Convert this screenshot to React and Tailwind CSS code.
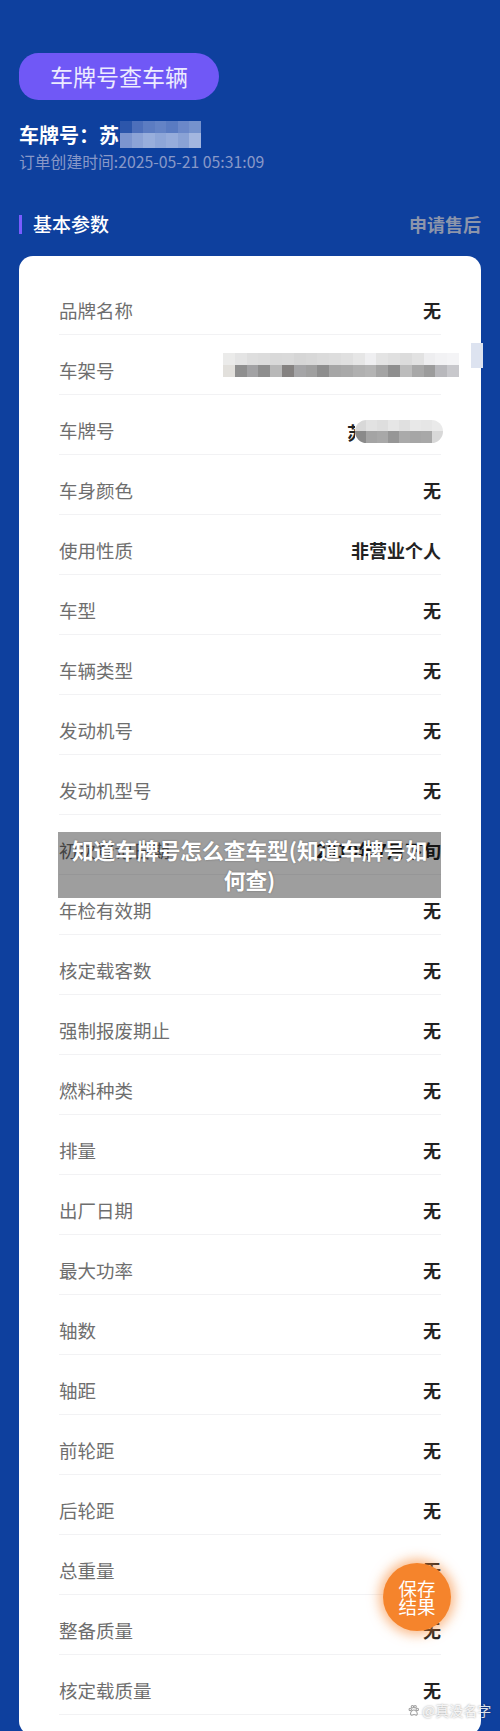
const rows = [
  ["品牌名称", "无"],
  ["车架号", "vin"],
  ["车牌号", "plate"],
  ["车身颜色", "无"],
  ["使用性质", "非营业个人"],
  ["车型", "无"],
  ["车辆类型", "无"],
  ["发动机号", "无"],
  ["发动机型号", "无"],
  ["初次登记日期", "2019年7月下旬"],
  ["年检有效期", "无"],
  ["核定载客数", "无"],
  ["强制报废期止", "无"],
  ["燃料种类", "无"],
  ["排量", "无"],
  ["出厂日期", "无"],
  ["最大功率", "无"],
  ["轴数", "无"],
  ["轴距", "无"],
  ["前轮距", "无"],
  ["后轮距", "无"],
  ["总重量", "无"],
  ["整备质量", "无"],
  ["核定载质量", "无"],
];

const vinTop = ["#ebebea", "#e4e4e4", "#dedede", "#dcdcdc", "#d9d9d9", "#dadada", "#d6d6d6", "#d8d8d8", "#dbdbdb", "#dddddd", "#e0e0e0", "#e6e6e6", "#efeff1", "#e4e4e4", "#e0e0e0", "#dcdcdc", "#e2e2e2", "#eeeef0", "#f2f2f4", "#f4f4f6"];
const vinBottom = ["#e2e0dc", "#8f8f8f", "#a2a2a4", "#8e8e8e", "#b8b8b8", "#858281", "#a5a5a7", "#a0a0a0", "#8e8e8e", "#a6a6a6", "#a9a9a9", "#b0b0b0", "#b4b4b4", "#a4a4a4", "#8f8f8f", "#bcbcbc", "#a8a8a8", "#9c9c9c", "#b8b8bc", "#c8c8cc"];
const plateTop = ["#d8d8d8", "#e2e2e2", "#dedede", "#e6e6e6", "#e0e0e0", "#e8e8e8", "#e6e6e6", "#eaeaea"];
const plateBottom = ["#8a8a8a", "#a4a4a4", "#a8a8a8", "#969696", "#aaaaaa", "#a6a6a6", "#a8a8a8", "#d8d8d8"];
const headTop = ["#2c56ab", "#4d6fbb", "#5c7cc2", "#6483c6", "#5a7bc2", "#6b88c9", "#7592cd"];
const headBottom = ["#7c95cf", "#8ca3d6", "#98aedc", "#8ea6d8", "#96acdb", "#8aa2d5", "#a3b6df"];

function Mosaic({ top, bottom, cell, h1, h2, rounded }) {
  return (
    <div className={"flex flex-col overflow-hidden " + (rounded ? "rounded-full" : "")}>
      <div className="flex">
        {top.map((c, i) => (
          <div key={i} style={{ backgroundColor: c, width: cell, height: h1 }} />
        ))}
      </div>
      <div className="flex">
        {bottom.map((c, i) => (
          <div key={i} style={{ backgroundColor: c, width: cell, height: h2 }} />
        ))}
      </div>
    </div>
  );
}

function Value({ v }) {
  if (v === "vin") {
    return (
      <div className="relative h-[20px] w-[240px]">
        <div className="absolute right-[-18px] top-[-7px]">
          <Mosaic top={vinTop} bottom={vinBottom} cell={11.8} h1={12} h2={12} />
        </div>
        <div className="absolute right-[-42px] top-[-17px] h-[25px] w-[12px] bg-[#dde3f0]" />
      </div>
    );
  }
  if (v === "plate") {
    return (
      <div className="flex items-center">
        <span className="h-[20px] w-[8px] overflow-hidden text-[18px] font-bold leading-[20px] text-[#222]">苏</span>
        <div className="-mr-[2px]">
          <Mosaic top={plateTop} bottom={plateBottom} cell={11} h1={11} h2={12} rounded />
        </div>
      </div>
    );
  }
  return <span className="text-[18px] font-bold leading-[20px] text-[#222]">{v}</span>;
}

export default function App() {
  return (
    <div
      className="relative h-[1731px] w-[500px] overflow-hidden bg-[#0e409e]"
      style={{ fontFamily: '"Noto Sans CJK SC", "Noto Sans", sans-serif' }}
    >
      <div className="px-[19px] pt-[53px]">
        <div className="flex h-[47px] w-[200px] items-center justify-center rounded-l-[20px] rounded-r-[24px] bg-[#7058f6] text-[23px] text-[#ecebff]">
          车牌号查车辆
        </div>

        <div className="mt-[22px] flex items-center">
          <span className="text-[20px] font-bold leading-[26px] text-white">车牌号：苏</span>
          <div className="ml-[1px] -mt-[2px]">
            <Mosaic top={headTop} bottom={headBottom} cell={11.5} h1={12} h2={15} />
          </div>
        </div>
        <div className="mt-[4px] text-[15.8px] leading-[20px] text-[#8898c8]">
          订单创建时间:2025-05-21 05:31:09
        </div>

        <div className="mt-[40px] flex items-center justify-between">
          <div className="flex items-center">
            <div className="h-[19px] w-[3px] bg-[#7a5cff]" />
            <span className="ml-[11px] text-[19px] font-medium leading-[24px] text-white">基本参数</span>
          </div>
          <span className="text-[18px] font-bold leading-[24px] text-[#8c95ab]">申请售后</span>
        </div>

        <div className="relative mt-[20px] rounded-[14px] bg-white px-[40px] pt-[19px] pb-[20px]">
          {rows.map(([label, v]) => (
            <div
              key={label}
              className="flex h-[60px] items-start justify-between border-b border-[#f2f2f4] pt-[25px]"
            >
              <span className="text-[18.5px] leading-[20px] text-[#6e6e6e]">{label}</span>
              <Value v={v} />
            </div>
          ))}

          <div className="absolute left-[39px] top-[576px] flex h-[66px] w-[383px] items-center justify-center bg-[rgba(0,0,0,0.38)] px-[12px]">
            <p className="text-center text-[21.7px] font-bold leading-[30px] text-white [text-shadow:0_0_2px_rgba(0,0,0,0.35)]">
              知道车牌号怎么查车型(知道车牌号如何查)
            </p>
          </div>
        </div>
      </div>

      <div className="absolute left-[383px] top-[1563px] flex h-[68px] w-[68px] flex-col items-center justify-center rounded-full bg-[#f5842c] text-[18.5px] leading-[18px] text-white shadow-[0_0_12px_4px_rgba(245,132,44,0.55)]">
        <span>保存</span>
        <span>结果</span>
      </div>

      <div className="absolute left-[407px] top-[1700px] flex items-center text-[14px] leading-[20px] text-white/85 [text-shadow:0_0_2px_rgba(0,0,0,0.45)]">
        <svg width="13" height="13" viewBox="0 0 24 24" fill="none" stroke="rgba(150,150,150,0.9)" strokeWidth="2">
          <circle cx="6" cy="10" r="2.2" />
          <circle cx="10" cy="5" r="2.2" />
          <circle cx="15" cy="5" r="2.2" />
          <circle cx="19" cy="10" r="2.2" />
          <path d="M12.5 11c-3 0-6 4-6 7 0 2 2 3 3.5 2.5s2-1 3-1 2 .5 3 1S19 20 19 18c0-3-3.5-7-6.5-7z" />
        </svg>
        <span className="ml-[2px]">@真没名字</span>
      </div>
    </div>
  );
}
